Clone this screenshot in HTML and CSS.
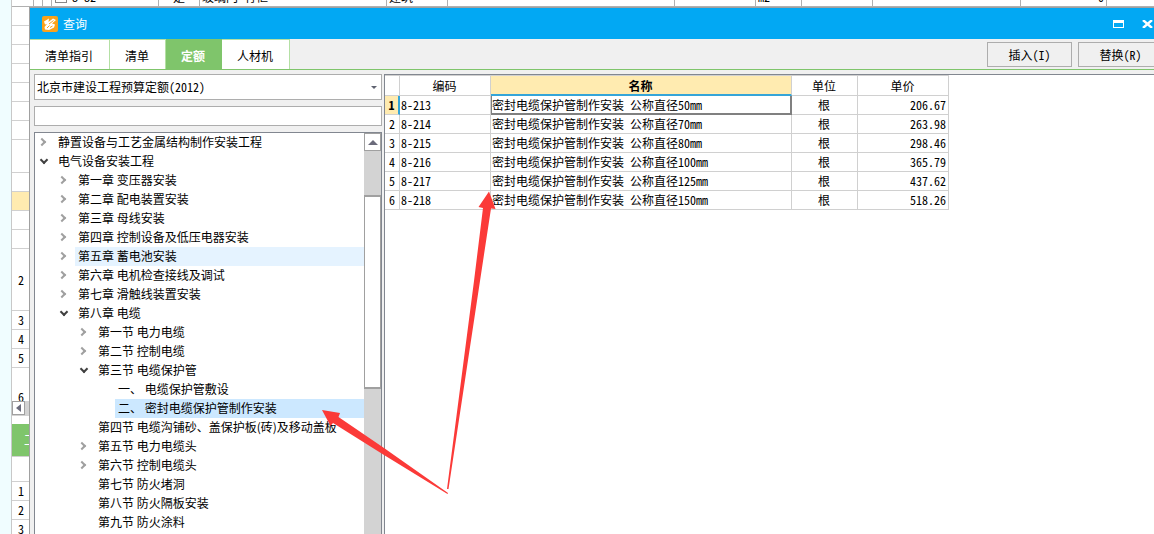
FILE: index.html
```html
<!DOCTYPE html>
<html lang="zh-CN">
<head>
<meta charset="utf-8">
<title>查询</title>
<link rel="stylesheet" href="styles.css">
</head>
<body>
<div class="app">
  <div class="app-edge"></div>
  <div class="app-main">
    <div class="sheet-row">
      <span class="c c-a"></span><span class="c c-b"></span><span class="c c-b"></span>
      <span class="c c-code"><i class="box"></i>8-82</span>
      <span class="c c-type">是</span>
      <span class="c c-name">玻璃门 有框</span>
      <span class="c c-kind">建筑</span>
      <span class="c c-spec"></span><span class="c c-d"></span>
      <span class="c c-unit">m2</span>
      <span class="c c-e"></span><span class="c c-f"></span>
      <span class="c c-num">0</span>
    </div>
    <div class="gutter">
      <div class="g"></div><div class="g"></div><div class="g"></div><div class="g"></div><div class="g"></div><div class="g"></div><div class="g"></div>
      <div class="g g-mid"></div>
      <div class="g"></div>
      <div class="g g-current"></div>
      <div class="g"></div><div class="g"></div>
      <div class="g g-tall">2</div>
      <div class="g">3</div><div class="g">4</div><div class="g">5</div>
      <div class="g g-cut">6</div>
      <div class="hscroll"><div class="left"><svg width="5" height="8" viewBox="0 0 5 8"><path d="M5 0v8L0 4z" fill="#6b6b7b"/></svg></div></div>
      <div class="green-tab">工</div>
      <div class="g g-head"></div>
      <div class="g">1</div><div class="g">2</div><div class="g">3</div>
    </div>
  </div>
</div>

<section class="dialog" aria-label="查询">
  <header class="titlebar">
    <svg class="logo" width="16" height="16" viewBox="0 0 16 16">
      <rect width="16" height="16" rx="2" fill="#faa21b"/>
      <path d="M2 5.500 7 2.500 6.500 6 11 2.500 14 4 10 7.500 13 8.500 12 11.500 7 14 3 13.500 2.500 11 5 8 3 8.500z" fill="#fff"/>
      <path d="M7 8 11.500 4.500M5 12 7.500 9.500M8 11.500 10.500 10" stroke="#faa21b" fill="none"/>
    </svg>
    <h1>查询</h1>
    <button class="win" aria-label="最大化"><svg width="11" height="8" viewBox="0 0 11 8"><path d="M0 0h11v8H0zM1 3v4h9V3z" fill="#fff" fill-rule="evenodd"/></svg></button>
    <button class="win" aria-label="关闭"><svg width="11" height="8" viewBox="0 0 11 8"><path d="M1 0 10 8M10 0 1 8" stroke="#fff" stroke-width="2.400"/></svg></button>
  </header>
  <nav class="toolbar">
    <div class="tabs">
      <button class="tab">清单指引</button><button class="tab">清单</button><button class="tab active">定额</button><button class="tab">人材机</button>
    </div>
    <div class="actions"><button class="action">插入(I)</button><button class="action">替换(R)</button></div>
  </nav>
  <div class="content">
    <aside class="side">
      <div class="combo">
        <select aria-label="定额库"><option>北京市建设工程预算定额(2012)</option></select>
        <svg class="combo-arrow" width="6" height="3" viewBox="0 0 6 3"><path d="M0 0h6L3 3z" fill="#5f6270"/></svg>
      </div>
      <input class="search" type="text" aria-label="搜索">
      <div class="tree-box">
        <ul class="tree">
          <li class="l0 shut"><span>静置设备与工艺金属结构制作安装工程</span></li>
          <li class="l0 open"><span>电气设备安装工程</span></li>
          <li class="l1 shut"><span>第一章 变压器安装</span></li>
          <li class="l1 shut"><span>第二章 配电装置安装</span></li>
          <li class="l1 shut"><span>第三章 母线安装</span></li>
          <li class="l1 shut"><span>第四章 控制设备及低压电器安装</span></li>
          <li class="l1 shut hover"><span>第五章 蓄电池安装</span></li>
          <li class="l1 shut"><span>第六章 电机检查接线及调试</span></li>
          <li class="l1 shut"><span>第七章 滑触线装置安装</span></li>
          <li class="l1 open"><span>第八章 电缆</span></li>
          <li class="l2 shut"><span>第一节 电力电缆</span></li>
          <li class="l2 shut"><span>第二节 控制电缆</span></li>
          <li class="l2 open"><span>第三节 电缆保护管</span></li>
          <li class="l3"><span>一、 电缆保护管敷设</span></li>
          <li class="l3 selected"><span>二、 密封电缆保护管制作安装</span></li>
          <li class="l2"><span>第四节 电缆沟铺砂、盖保护板(砖)及移动盖板</span></li>
          <li class="l2 shut"><span>第五节 电力电缆头</span></li>
          <li class="l2 shut"><span>第六节 控制电缆头</span></li>
          <li class="l2"><span>第七节 防火堵洞</span></li>
          <li class="l2"><span>第八节 防火隔板安装</span></li>
          <li class="l2"><span>第九节 防火涂料</span></li>
        </ul>
        <div class="vscroll">
          <div class="up"><svg width="10" height="5" viewBox="0 0 10 5"><path d="M0 5h10L5 0z" fill="#6b6b7b"/></svg></div>
          <div class="thumb"></div>
        </div>
      </div>
    </aside>
    <main class="grid-box">
      <table class="grid">
        <colgroup><col class="w-no"><col class="w-code"><col class="w-name"><col class="w-unit"><col class="w-price"></colgroup>
        <thead><tr><th></th><th>编码</th><th class="sorted">名称</th><th>单位</th><th>单价</th></tr></thead>
        <tbody>
          <tr class="current"><th>1</th><td>8-213</td><td class="name">密封电缆保护管制作安装 公称直径50mm</td><td>根</td><td>206.67</td></tr>
          <tr><th>2</th><td>8-214</td><td>密封电缆保护管制作安装 公称直径70mm</td><td>根</td><td>263.98</td></tr>
          <tr><th>3</th><td>8-215</td><td>密封电缆保护管制作安装 公称直径80mm</td><td>根</td><td>298.46</td></tr>
          <tr><th>4</th><td>8-216</td><td>密封电缆保护管制作安装 公称直径100mm</td><td>根</td><td>365.79</td></tr>
          <tr><th>5</th><td>8-217</td><td>密封电缆保护管制作安装 公称直径125mm</td><td>根</td><td>437.62</td></tr>
          <tr><th>6</th><td>8-218</td><td>密封电缆保护管制作安装 公称直径150mm</td><td>根</td><td>518.26</td></tr>
        </tbody>
      </table>
    </main>
  </div>
</section>

<svg class="arrows" width="520" height="500" viewBox="0 0 520 500" fill="#fb3a38">
  <path d="M489 191.500 495.500 209 491 208.500 480 281 448.500 489 447 489 474 281 483 208 478.500 207z"/>
  <path d="M322 410 340 413 338.500 417 384 448 448 493 447.500 494 384 455 333 423 330.500 426z"/>
</svg>
</body>
</html>
```
FILE: styles.css
```css
*, *::before { box-sizing: border-box; }

body {
  margin: 0;
  height: 100vh;
  overflow: hidden;
  position: relative;
  background: #fff;
  color: #000;
  font: 12px/18px "Noto Sans CJK SC", sans-serif;
}

button, input, select { font: inherit; color: inherit; }
button { padding: 0; border: 0; background: none; }

/* Spreadsheet behind the dialog */
.app { display: flex; height: 100vh; }
.app-edge { width: 12px; background: #f0fdff; border-right: 1px solid #c8c8c8; }
.app-main { flex: 1; min-width: 0; font-feature-settings: "hwid"; }
.sheet-row {
  display: flex;
  align-items: flex-end;
  height: 7px;
  overflow: hidden;
  border-bottom: 1px solid #b0b0b0;
}
.c { flex: none; height: 18px; line-height: 18px; padding-left: 2px; border-right: 1px solid #b0b0b0; white-space: nowrap; }
.c-a { width: 22px; }
.c-b { width: 9px; }
.c-code { display: flex; width: 107px; padding-left: 3px; gap: 5px; }
.box { width: 12px; height: 12px; margin-top: 3px; border: 1px solid #888; }
.c-type { width: 41px; padding-left: 14px; }
.c-name { width: 187px; }
.c-kind { width: 61px; }
.c-spec { width: 227px; }
.c-d { width: 81px; }
.c-unit { width: 46px; }
.c-e { width: 71px; }
.c-f { width: 148px; }
.c-num { width: 86px; padding-right: 2px; text-align: right; }

.gutter { width: 18px; }
.g {
  display: flex;
  align-items: center;
  justify-content: center;
  height: 19px;
  border-bottom: 1px solid #d0d0d0;
}
.g-mid { height: 33px; }
.g-current { background: #ffebb0; }
.g-tall { height: 62px; }
.g-cut { height: 33px; border: 0; align-items: flex-end; line-height: 8px; overflow: hidden; }
.hscroll { height: 15px; background: #d3d3d3; }
.left { display: flex; align-items: center; width: 13px; height: 14px; padding-left: 3px; background: #fff; border: 1px solid #a0a0a0; }
.green-tab { height: 32px; margin-top: 8px; padding-left: 12px; line-height: 32px; overflow: hidden; background: #7fc56b; color: #fff; }
.g-head { height: 26px; border-top: 1px solid #d0d0d0; }

/* Dialog window */
.dialog {
  position: absolute;
  inset: 7px 0 0 29px;
  display: flex;
  flex-direction: column;
  overflow: hidden;
  background: #f0f0f0;
  border: solid #a0a0a0;
  border-width: 1px 0 0 1px;
}
.titlebar { display: flex; align-items: center; height: 31px; flex: none; padding-left: 12px; gap: 5px; background: #02a8f3; color: #fff; }
.titlebar h1 { flex: 1; margin: 0; font-size: 12px; font-weight: 400; }
.win { display: flex; margin-right: 1px; }
.win + .win { margin-left: 12px; }

.toolbar { display: flex; justify-content: space-between; height: 31px; flex: none; border-bottom: 1px solid #7fc56b; }
.tabs { display: flex; }
.tab { padding: 2px 16px 0 15px; background: #fff; border: solid #b4e0a4; border-width: 1px 1px 0 0; }
.tab.active { background: #7fc56b; border-color: #7fc56b; color: #fff; font-weight: 700; }
.actions { display: flex; gap: 6px; margin: 3px -9px 2px 0; font-feature-settings: "hwid"; }
.action { width: 85px; height: 25px; border: 1px solid #adadad; }

.content { display: flex; flex: 1; min-height: 0; gap: 2px; padding: 4px 0 0 4px; }
.side { display: flex; flex-direction: column; width: 348px; flex: none; gap: 6px; }
.combo { position: relative; height: 26px; flex: none; }
.combo select { width: 100%; height: 100%; padding: 0 2px; appearance: none; background: #fff; border: 1px solid #adadad; border-radius: 0; font-feature-settings: "hwid"; }
.combo-arrow { position: absolute; right: 5px; top: 12px; }
.search { width: 100%; height: 20px; flex: none; padding: 0 2px; background: #fff; border: 1px solid #adadad; }
.tree-box { display: flex; flex: 1; min-height: 0; background: #fff; border: solid #828790; border-width: 1px 1px 0 1px; overflow: hidden; }
.tree { flex: 1; min-width: 0; margin: 0; padding: 0; list-style: none; }
.tree li { display: flex; height: 19px; line-height: 17px; white-space: nowrap; }
.tree li::before { content: ""; width: 6px; height: 6px; flex: none; margin: 6px 12px 0 4px; }
.tree .shut::before { border: solid #a0a0a0; border-width: 2px 2px 0 0; transform: rotate(45deg); }
.tree .open::before { border: solid #404040; border-width: 0 2px 2px 0; margin: 5px 10px 0 6px; transform: rotate(45deg); }
.tree span { flex: 1; padding-left: 3px; margin-left: -2px; }
.l0 { padding-left: 0; }
.l1 { padding-left: 20px; }
.l2 { padding-left: 40px; }
.l3 { padding-left: 60px; }
.hover span { background: #e5f3ff; }
.selected span { background: #cce8ff; }

.vscroll { width: 17px; flex: none; background: #d3d3d3; }
.up { display: flex; align-items: center; justify-content: center; height: 18px; background: #fff; border: 1px solid #a0a0a0; }
.thumb { height: 194px; margin-top: 44px; background: #fff; border: 1px solid #a0a0a0; border-width: 2px 1px; }

/* Result grid */
.grid-box { flex: 1; min-width: 0; background: #fff; border: solid #828790; border-width: 1px 0 0 1px; }
.grid { table-layout: fixed; width: 564px; border-spacing: 0; border-top: 1px solid #d0d0d0; font-feature-settings: "hwid"; }
.w-no { width: 15px; }
.w-code { width: 91px; }
.w-name { width: 301px; }
.w-unit { width: 66px; }
.w-price { width: 91px; }
.grid th, .grid td { height: 19px; padding: 0 2px 0 1px; line-height: 18px; font-weight: 400; border: solid #d0d0d0; border-width: 0 1px 1px 0; white-space: nowrap; }
.grid thead th { height: 20px; }
.grid tbody th { padding: 0; }
.grid td:nth-child(4) { text-align: center; }
.grid td:nth-child(5) { text-align: right; }
.grid thead .sorted { background: #ffebb0; border-bottom: 2px solid #35a5d8; font-weight: 700; line-height: 17px; }
.grid .current th { background: #ffebb0; border-right: 2px solid #35a5d8; font-weight: 700; }
.grid .current .name { padding-left: 0; line-height: 16px; border: solid #808080; border-width: 0 2px 2px 1px; }

/* Annotation arrows over everything */
.arrows { position: absolute; top: 0; left: 0; pointer-events: none; }
```
